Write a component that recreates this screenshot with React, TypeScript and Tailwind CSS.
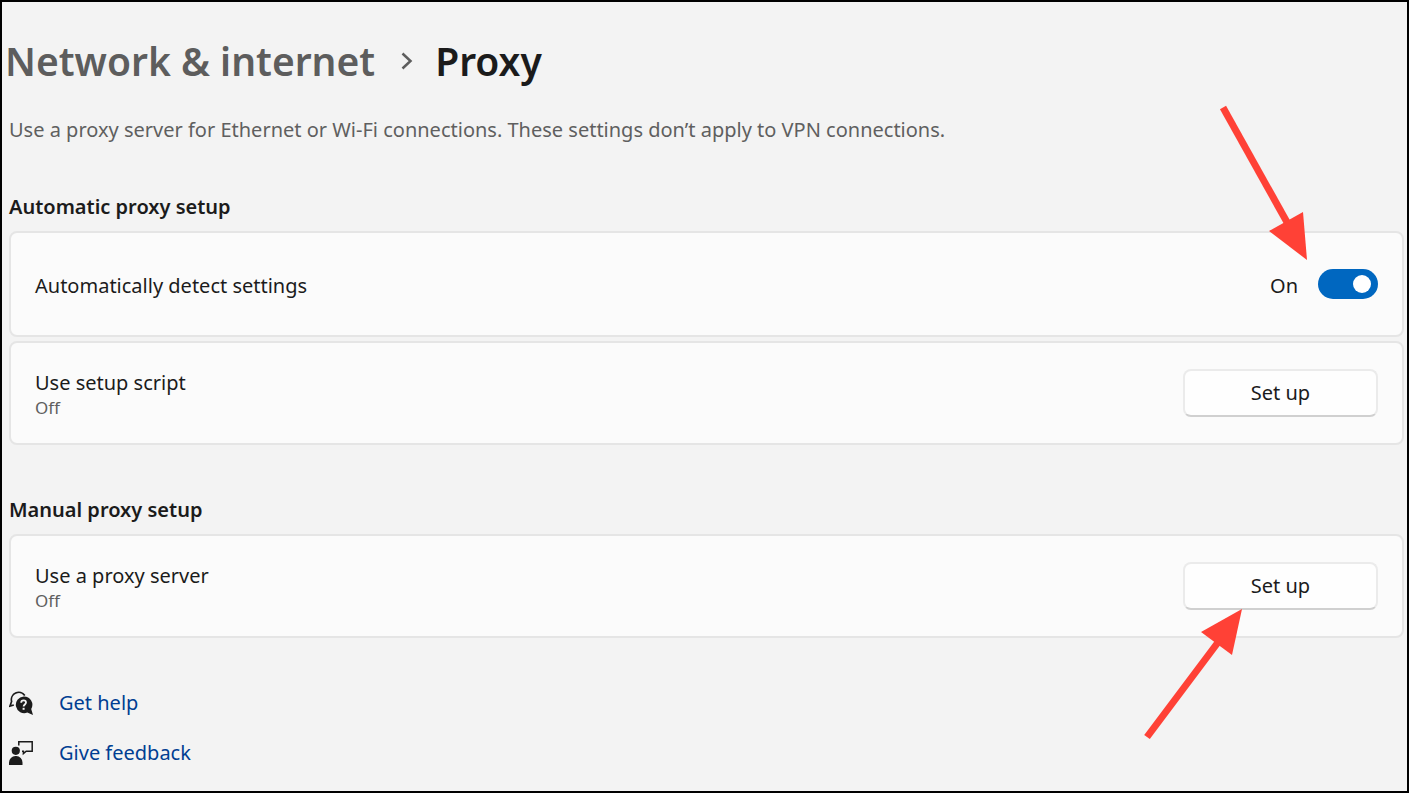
import { useState } from "react";
import type { ReactNode } from "react";

interface SettingRowProps {
    title: string;
    status: string;
    children?: ReactNode;
}

function Section({ title, children }: { title: string; children: ReactNode }) {
    return (
        <section className="mt-[52px]">
            <h2 className="text-[20px] leading-[26px] font-semibold">{title}</h2>
            <div className="mt-[11px] flex flex-col gap-1">{children}</div>
        </section>
    );
}

function SettingRow({ title, status, children }: SettingRowProps) {
    return (
        <div className="flex h-[104px] items-center justify-between rounded-lg border-2 border-[#e5e5e5] bg-[#fbfbfb] px-6">
            <div className="pt-1">
                <h3 className="text-[20px] leading-[26px]">{title}</h3>
                <p className="text-[17px] leading-6 text-[#5f5f5f]">{status}</p>
            </div>
            <div className="relative">
                <button
                    type="button"
                    aria-label={`Set up: ${title}`}
                    className="block h-12 w-[195px] rounded-lg border-2 border-[#ebebeb] border-b-[#d0d0d0] bg-[#fefefe] text-[20px] leading-[26px] hover:bg-[#f6f6f6]"
                >
                    Set up
                </button>
                {children}
            </div>
        </div>
    );
}

function ToggleArrow() {
    return (
        <svg
            className="pointer-events-none absolute right-[69px] bottom-[38px]"
            width="90"
            height="158"
            viewBox="0 0 90 158"
            aria-hidden="true"
        >
            <path d="M4 4.5 69 121" stroke="#ff4136" strokeWidth="7" />
            <path d="M88 157 50 128 84 109z" fill="#ff4136" />
        </svg>
    );
}

function ButtonArrow() {
    return (
        <svg
            className="pointer-events-none absolute top-[46px] right-[135px]"
            width="100"
            height="132"
            viewBox="0 0 100 132"
            aria-hidden="true"
        >
            <path d="M4 129 76 33" stroke="#ff4136" strokeWidth="7" />
            <path d="M99 1 58 24 89 47z" fill="#ff4136" />
        </svg>
    );
}

function HelpIcon() {
    return (
        <svg width="24" height="24" viewBox="0 0 24 24" fill="none" aria-hidden="true">
            <path d="M15.8 4.4A7.4 7.4 0 0 0 2.6 10.5L1 15l3.8-1" stroke="#1b1b1b" strokeWidth="1.7" />
            <path d="M14.700 5.400a8.400 8.400 0 1 0 3.600 16.200L24 24l-1.800-6A8.400 8.400 0 0 0 14.700 5.400z" fill="#1b1b1b" />
            <path d="M12.200 11.700c0-1.400 1-2.300 2.400-2.300s2.400.9 2.400 2.200c0 1.800-2.400 1.900-2.400 3.900" stroke="#f3f3f3" strokeWidth="1.800" />
            <path d="M13.600 16.800h2v2h-2z" fill="#f3f3f3" />
        </svg>
    );
}

function FeedbackIcon() {
    return (
        <svg width="24" height="24" viewBox="0 0 24 24" fill="none" aria-hidden="true">
            <circle cx="6.8" cy="9.8" r="4.1" fill="#1b1b1b" />
            <path d="M0 24v-2.5A6.5 6.5 0 0 1 6.5 15h.8a6.5 6.5 0 0 1 6.2 6.5V24z" fill="#1b1b1b" />
            <path d="M9.8 4.5V.8h13.4v9.4h-6L14.400 12.600v-2.400h-1.400" stroke="#1b1b1b" strokeWidth="1.5" />
        </svg>
    );
}

export default function App() {
    const [autoDetect, setAutoDetect] = useState(true);

    return (
        <main className="min-h-screen border-2 border-black bg-[#f3f3f3] pt-[35px] pr-[3px] pb-6 pl-[7px] font-['Noto_Sans','Open_Sans',sans-serif] text-[#1b1b1b]">
            <nav aria-label="Breadcrumb" className="-ml-1 flex items-center text-[39px] leading-[48px] font-semibold">
                <a href="#network" className="text-[#5d5d5d]">Network &amp; internet</a>
                <svg className="mr-[22px] ml-[26px]" width="12" height="18" viewBox="0 0 12 18" fill="none" aria-hidden="true">
                    <path d="M1.5 1.5 9.5 9l-8 7.5" stroke="#5d5d5d" strokeWidth="2.5" />
                </svg>
                <h1>Proxy</h1>
            </nav>
            <p className="mt-[33px] text-[20px] leading-6 text-[#5f5f5f]">
                Use a proxy server for Ethernet or Wi-Fi connections. These settings don’t apply to VPN connections.
            </p>

            <Section title="Automatic proxy setup">
                <div className="flex h-[106px] items-center justify-between rounded-lg border-2 border-[#e5e5e5] bg-[#fbfbfb] px-6">
                    <label htmlFor="auto-detect" className="pt-1 text-[20px] leading-[26px]">
                        Automatically detect settings
                    </label>
                    <div className="relative flex items-center gap-5">
                        <span className="pt-1 text-[20px] leading-[26px]">{autoDetect ? "On" : "Off"}</span>
                        <input
                            id="auto-detect"
                            type="checkbox"
                            role="switch"
                            checked={autoDetect}
                            onChange={(e) => setAutoDetect(e.target.checked)}
                            className="flex h-[30px] w-[60px] appearance-none items-center rounded-full bg-[#8a8a8a] px-[7px] before:size-[18px] before:rounded-full before:bg-white checked:justify-end checked:bg-[#0067c0]"
                        />
                        <ToggleArrow />
                    </div>
                </div>
                <SettingRow title="Use setup script" status="Off" />
            </Section>

            <Section title="Manual proxy setup">
                <SettingRow title="Use a proxy server" status="Off">
                    <ButtonArrow />
                </SettingRow>
            </Section>

            <div className="mt-[52px] flex flex-col items-start gap-6 text-[20px] leading-[26px] text-[#003e92]">
                <a href="#help" className="flex items-center gap-[26px]">
                    <HelpIcon />
                    Get help
                </a>
                <a href="#feedback" className="flex items-center gap-[26px]">
                    <FeedbackIcon />
                    Give feedback
                </a>
            </div>
        </main>
    );
}
